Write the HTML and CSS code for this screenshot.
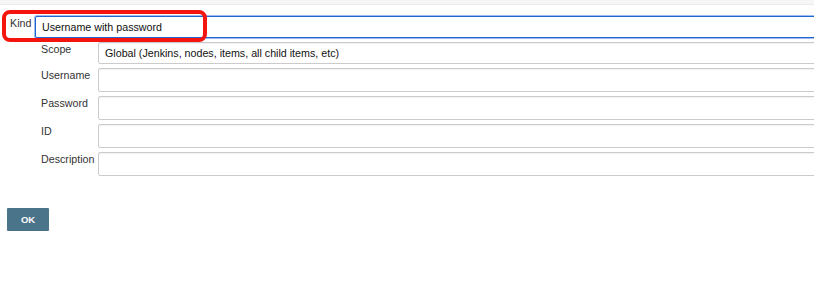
FILE: index.html
```html
<!DOCTYPE html>
<html lang="en">
<head>
    <meta charset="UTF-8">
    <meta name="viewport" content="width=device-width, initial-scale=1.0">
    <title>New credentials</title>
    <link rel="stylesheet" href="styles.css">
</head>
<body>
    <div class="topbar"></div>

    <form class="cred-form">
        <div class="kind-row">
            <label class="kind-label">Kind</label>
            <div class="field field-active">Username with password</div>
            <span class="highlight"></span>
        </div>

        <div class="nested">
            <div class="row row-scope">
                <label>Scope</label>
                <div class="field">Global (Jenkins, nodes, items, all child items, etc)</div>
            </div>
            <div class="row">
                <label>Username</label>
                <input type="text" class="field">
            </div>
            <div class="row">
                <label>Password</label>
                <input type="password" class="field">
            </div>
            <div class="row">
                <label>ID</label>
                <input type="text" class="field">
            </div>
            <div class="row">
                <label>Description</label>
                <input type="text" class="field">
            </div>
        </div>

        <button type="button" class="ok-btn">OK</button>
    </form>
</body>
</html>
```

FILE: styles.css
```css
* {
    margin: 0;
    padding: 0;
    box-sizing: border-box;
}

body {
    font-family: 'Liberation Sans', Arial, sans-serif;
    font-size: 10.7px;
    color: #333;
    background: #fff;
    overflow: hidden;
}

.topbar {
    height: 5px;
    background: #f6f6f6;
    border-bottom: 1px solid #ebebeb;
}

.cred-form {
    padding-top: 11px;
}

.kind-row {
    position: relative;
    display: flex;
    height: 22px;
}

.kind-label {
    width: 35px;
    padding-left: 10px;
    line-height: 14px;
}

.field {
    flex: 1;
    margin-right: -12px;
    height: 24px;
    border: 1px solid #cbcbcb;
    box-shadow: inset 0 1px 1px rgba(0, 0, 0, 0.06);
    border-radius: 2px;
    background: #fff;
    font-family: inherit;
    font-size: 10.7px;
    color: #111;
    padding-left: 6px;
    display: flex;
    align-items: center;
}

.field-active {
    height: 22px;
    border: 1px solid #1f66d1;
    box-shadow: 0 0 0 1px #9dbdf0;
}

.highlight {
    position: absolute;
    left: 2px;
    top: -6px;
    width: 205px;
    height: 32px;
    border: 4px solid #f5150f;
    border-radius: 8px;
}

.nested {
    margin-top: 4px;
    display: flex;
    flex-direction: column;
    gap: 4px;
}

.row {
    display: flex;
}

.row label {
    width: 98px;
    padding-left: 41px;
    line-height: 14px;
    white-space: nowrap;
}

.row-scope .field {
    height: 22px;
}

.ok-btn {
    margin: 32px 0 0 7px;
    width: 42px;
    height: 23px;
    border: none;
    border-radius: 1px;
    background: #4a7489;
    color: #fff;
    font-family: inherit;
    font-size: 9.5px;
    font-weight: bold;
}
```
